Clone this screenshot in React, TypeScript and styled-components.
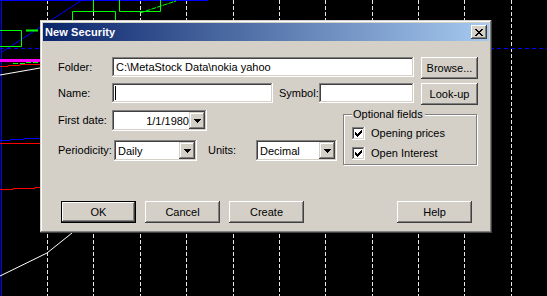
import styled, { createGlobalStyle } from 'styled-components'

const GlobalStyle = createGlobalStyle`
  html, body {
    margin: 0;
    padding: 0;
    background: #000;
  }
  body {
    font-family: "Liberation Sans", Arial, sans-serif;
    font-size: 11px;
    color: #000;
  }
`

const Desktop = styled.div`
  position: relative;
  width: 547px;
  height: 296px;
  overflow: hidden;
  background: #000;
  > svg {
    display: block;
  }
`

const Window = styled.div`
  position: absolute;
  left: 40px;
  top: 20px;
  width: 452px;
  height: 213px;
  box-sizing: border-box;
  padding: 3px;
  background: #d4d0c8;
  box-shadow: inset -1px -1px #404040, inset 1px 1px #d4d0c8, inset -2px -2px #808080, inset 2px 2px #fff;
  display: flex;
  flex-direction: column;
`

const TitleBar = styled.div`
  height: 18px;
  display: flex;
  align-items: center;
  justify-content: space-between;
  padding: 0 2px 0 2px;
  background: linear-gradient(to right, #0a246a, #a6caf0);
  color: #fff;
  font-weight: bold;
  font-size: 11px;
  > span {
    letter-spacing: 0.1px;
  }
`

const CloseButton = styled.div`
  width: 16px;
  height: 14px;
  box-sizing: border-box;
  background: #d4d0c8;
  display: flex;
  align-items: center;
  justify-content: center;
  box-shadow: inset -1px -1px #404040, inset 1px 1px #fff, inset -2px -2px #808080, inset 2px 2px #d4d0c8;
`

const Body = styled.div`
  flex: 1;
  display: flex;
  flex-direction: column;
  padding: 16px 11px 7px 15px;
`

const Row = styled.div<{ $gap?: number }>`
  display: flex;
  align-items: flex-start;
  margin-top: ${(p) => p.$gap ?? 0}px;
`

const Label = styled.div<{ $w: number; $ml?: number; $h?: number }>`
  width: ${(p) => p.$w}px;
  margin-left: ${(p) => p.$ml ?? 0}px;
  height: ${(p) => p.$h ?? 20}px;
  line-height: ${(p) => p.$h ?? 20}px;
  white-space: nowrap;
`

const Field = styled.div<{ $w: number; $h?: number; $right?: boolean }>`
  width: ${(p) => p.$w}px;
  height: ${(p) => p.$h ?? 20}px;
  box-sizing: border-box;
  background: #fff;
  padding: 2px 2px 2px 4px;
  display: flex;
  align-items: center;
  justify-content: ${(p) => (p.$right ? 'flex-end' : 'flex-start')};
  white-space: nowrap;
  overflow: hidden;
  box-shadow: inset -1px -1px #fff, inset 1px 1px #808080, inset -2px -2px #d4d0c8, inset 2px 2px #404040;
  > .text {
    flex: 1;
    text-align: ${(p) => (p.$right ? 'right' : 'left')};
  }
`

const Caret = styled.span`
  display: block;
  width: 1px;
  height: 14px;
  margin-left: -1px;
  background: #000;
`

const ArrowButton = styled.div`
  width: 16px;
  height: 17px;
  box-sizing: border-box;
  background: #d4d0c8;
  display: flex;
  align-items: center;
  justify-content: center;
  box-shadow: inset -1px -1px #404040, inset 1px 1px #d4d0c8, inset -2px -2px #808080, inset 2px 2px #fff;
`

const Button = styled.button<{ $w?: number; $ml?: number; $default?: boolean }>`
  width: ${(p) => p.$w ?? 75}px;
  height: 22px;
  margin: 0 0 0 ${(p) => p.$ml ?? 0}px;
  padding: 0;
  border: ${(p) => (p.$default ? '1px solid #000' : 'none')};
  box-sizing: border-box;
  background: #d4d0c8;
  font-family: "Liberation Sans", Arial, sans-serif;
  font-size: 11px;
  color: #000;
  box-shadow: inset -1px -1px #404040, inset 1px 1px #fff, inset -2px -2px #808080, inset 2px 2px #d4d0c8;
`

const Lower = styled.div`
  display: flex;
  margin-top: 5px;
`

const LeftCol = styled.div`
  width: 279px;
  display: flex;
  flex-direction: column;
`

const Group = styled.div`
  box-sizing: border-box;
  width: 134px;
  height: 51px;
  margin: 4px 0 0 6px;
  padding: 0 0 0 8px;
  border: 1px solid #808080;
  box-shadow: 1px 1px 0 #fff, inset 1px 1px 0 #fff;
  display: flex;
  flex-direction: column;
`

const Legend = styled.span`
  align-self: flex-start;
  margin: -7px 0 0 0;
  padding: 0 2px 0 1px;
  line-height: 13px;
  background: #d4d0c8;
`

const CheckRow = styled.label`
  display: flex;
  align-items: center;
  height: 20px;
  gap: 6px;
  &:first-of-type {
    margin-top: 2px;
  }
`

const CheckBox = styled.span`
  width: 13px;
  height: 13px;
  box-sizing: border-box;
  background: #fff;
  display: flex;
  align-items: center;
  justify-content: center;
  box-shadow: inset -1px -1px #fff, inset 1px 1px #808080, inset -2px -2px #d4d0c8, inset 2px 2px #404040;
`

const Footer = styled.div`
  margin-top: auto;
  display: flex;
  padding-left: 3px;
`

function Pixels({ rows, w, h }: { rows: string[]; w: number; h: number }) {
  const d = rows
    .flatMap((r, y) => r.split('').map((c, x) => (c === 'x' ? `M${x} ${y}h1v1h-1z` : '')))
    .join('')
  return (
    <svg width={w} height={h} viewBox={`0 0 ${w} ${h}`} shapeRendering="crispEdges">
      <path d={d} fill="#000" />
    </svg>
  )
}

const closeGlyph = ['xx....xx', '.xx..xx.', '..xxxx..', '...xx...', '..xxxx..', '.xx..xx.', 'xx....xx']
const arrowGlyph = ['xxxxxxx', '.xxxxx.', '..xxx..', '...x...']
const checkGlyph = ['......x', '.....xx', 'x...xxx', 'xx.xxx.', 'xxxxx..', '.xxx...', '..x....']

function Arrow() {
  return (
    <ArrowButton>
      <Pixels rows={arrowGlyph} w={7} h={4} />
    </ArrowButton>
  )
}

function Check({ label }: { label: string }) {
  return (
    <CheckRow>
      <CheckBox>
        <Pixels rows={checkGlyph} w={7} h={7} />
      </CheckBox>
      <span>{label}</span>
    </CheckRow>
  )
}

const gridXs = [47.5, 93.5, 140.5, 186.5, 233.5, 279.5, 325.5, 372.5, 418.5, 464.5, 511.5]

function Chart() {
  return (
    <svg width={547} height={296} viewBox="0 0 547 296" fill="none">
      <rect width={547} height={296} fill="#000" />
      {gridXs.map((x) => (
        <line key={x} x1={x} y1={0} x2={x} y2={296} stroke="#e8e8e8" strokeDasharray="4 2" />
      ))}
      <line x1={0} y1={48.5} x2={547} y2={48.5} stroke="#0000ff" strokeDasharray="4 3" />
      <line x1={1.5} y1={0} x2={1.5} y2={296} stroke="#0000ff" />
      <line x1={0} y1={0.5} x2={208} y2={0.5} stroke="#0000ff" />
      <line x1={2} y1={52} x2={82} y2={0} stroke="#0000ff" />
      <polyline points="0,30.5 21.5,30.5 21.5,46.5 0,46.5" stroke="#00ff00" />
      <line x1={26} y1={30.5} x2={38} y2={30.5} stroke="#00ff00" strokeWidth={2} />
      <polyline points="72.5,25 72.5,11.5 115.5,11.5 115.5,25" stroke="#00ff00" />
      <line x1={93.5} y1={0} x2={93.5} y2={11} stroke="#00ff00" />
      <polyline points="119.5,0 119.5,11.5 160.5,11.5 160.5,0" stroke="#00ff00" />
      <line x1={140} y1={13} x2={176} y2={1} stroke="#00ff00" strokeDasharray="5 1" />
      <line x1={0} y1={60.5} x2={40} y2={60.5} stroke="#ff00ff" strokeWidth={3} />
      <polyline points="13,63.5 25,63.5 25,62.5 38,62.5" stroke="#00ff00" strokeDasharray="5 2" />
      <polyline points="0,66.5 8,66.5 8,65.5 20,65.5 20,64.5 40,64.5" stroke="#ff0000" />
      <line x1={0} y1={75} x2={40} y2={68} stroke="#fff" />
      <polyline points="0,140.5 10,140.5 10,139.5 24,139.5 24,138.5 40,138.5" stroke="#0000ff" />
      <line x1={0} y1={143.5} x2={40} y2={143.5} stroke="#ff0000" />
      <polyline points="0,189.5 13,189.5 13,188.5 35,188.5 35,187.5 40,187.5" stroke="#ff0000" />
      <polyline points="0,276 47,253 72,233" stroke="#fff" />
    </svg>
  )
}

export default function App() {
  return (
    <Desktop>
      <GlobalStyle />
      <Chart />
      <Window>
        <TitleBar>
          <span>New Security</span>
          <CloseButton>
            <Pixels rows={closeGlyph} w={8} h={7} />
          </CloseButton>
        </TitleBar>
        <Body>
          <Row>
            <Label $w={54}>Folder:</Label>
            <Field $w={302}>
              <span className="text">C:\MetaStock Data\nokia yahoo</span>
            </Field>
            <Button $w={57} $ml={7}>
              Browse...
            </Button>
          </Row>
          <Row $gap={4}>
            <Label $w={54}>Name:</Label>
            <Field $w={161}>
              <Caret />
            </Field>
            <Label $w={40} $ml={6}>
              Symbol:
            </Label>
            <Field $w={95} />
            <Button $w={57} $ml={7}>
              Look-up
            </Button>
          </Row>
          <Lower>
            <LeftCol>
              <Row>
                <Label $w={54} $h={21}>
                  First date:
                </Label>
                <Field $w={95} $h={21} $right>
                  <span className="text">1/1/1980</span>
                  <Arrow />
                </Field>
              </Row>
              <Row $gap={9}>
                <Label $w={56} $h={21}>
                  Periodicity:
                </Label>
                <Field $w={83} $h={21}>
                  <span className="text">Daily</span>
                  <Arrow />
                </Field>
                <Label $w={48} $ml={11} $h={21}>
                  Units:
                </Label>
                <Field $w={81} $h={21}>
                  <span className="text">Decimal</span>
                  <Arrow />
                </Field>
              </Row>
            </LeftCol>
            <Group>
              <Legend>Optional fields</Legend>
              <Check label="Opening prices" />
              <Check label="Open Interest" />
            </Group>
          </Lower>
          <Footer>
            <Button $default>OK</Button>
            <Button $ml={9}>Cancel</Button>
            <Button $ml={9}>Create</Button>
            <Button $ml={93}>Help</Button>
          </Footer>
        </Body>
      </Window>
    </Desktop>
  )
}
